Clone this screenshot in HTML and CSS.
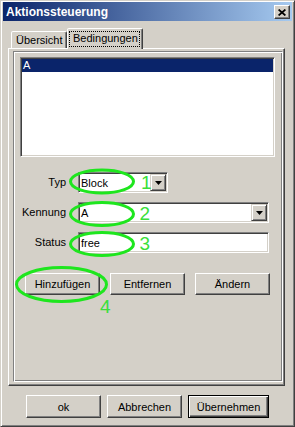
FILE: index.html
```html
<!DOCTYPE html>
<html lang="de">

	<head>
		<meta charset="UTF-8">
		<title>Aktionssteuerung</title>
		<link rel="stylesheet" href="styles.css">
	</head>

	<body>
		<div class="window">
			<!-- Titelleiste -->
			<div class="titlebar">
				<span class="title">Aktionssteuerung</span>
				<button class="close">
					<svg width="8" height="7" viewBox="0 0 8 7"><path d="M0.6 0.5L7.4 6.5M7.4 0.5L0.6 6.5" stroke="#000" stroke-width="1.7" fill="none"/></svg>
				</button>
			</div>

			<!-- Reiter -->
			<div class="tabs">
				<div class="tab">Übersicht</div>
				<div class="tab active"><span class="focus">Bedingungen</span></div>
			</div>

			<div class="panel">
				<div class="group">
					<div class="listbox">
						<div class="item selected">A</div>
					</div>

					<div class="form">
						<label>Typ</label>
						<div class="field short">
							<span>Block</span>
							<span class="drop"><svg width="7" height="4" viewBox="0 0 7 4"><path d="M0 0h7L3.5 4z" fill="#000"/></svg></span>
						</div>
						<label>Kennung</label>
						<div class="field">
							<span>A</span>
							<span class="drop"><svg width="7" height="4" viewBox="0 0 7 4"><path d="M0 0h7L3.5 4z" fill="#000"/></svg></span>
						</div>
						<label>Status</label>
						<div class="field">
							<span>free</span>
						</div>
					</div>

					<div class="actions">
						<button class="btn">Hinzufügen</button>
						<button class="btn">Entfernen</button>
						<button class="btn">Ändern</button>
					</div>
				</div>
			</div>

			<div class="footer">
				<button class="btn">ok</button>
				<button class="btn">Abbrechen</button>
				<button class="btn default">Übernehmen</button>
			</div>

			<!-- Markierungen -->
			<svg class="marks" width="295" height="427" viewBox="0 0 295 427">
				<g fill="none" stroke="#1ee61e" stroke-width="3">
					<ellipse cx="102" cy="181.5" rx="31.5" ry="11.5"/>
					<ellipse cx="102" cy="214" rx="31.5" ry="11.5"/>
					<ellipse cx="102" cy="244" rx="31.5" ry="11.5"/>
					<ellipse cx="61.5" cy="284.5" rx="45" ry="17"/>
				</g>
				<g class="num">
					<text x="141" y="189">1</text>
					<text x="139.5" y="220">2</text>
					<text x="139.5" y="250">3</text>
					<text x="100" y="313">4</text>
				</g>
			</svg>
		</div>
	</body>

</html>
```

FILE: styles.css
```css
body {
	margin: 0;
	padding: 0;
	background-color: #d4d0c8;
}

.window {
	position: relative;
	width: 295px;
	height: 427px;
	box-sizing: border-box;
	background-color: #d4d0c8;
	border: 1px solid;
	border-color: #d4d0c8 #404040 #404040 #d4d0c8;
	box-shadow: inset 1px 1px #fff, inset -1px -1px #808080;
	padding: 1px 2px 0 2px;
	font-family: "Liberation Sans", Arial, sans-serif;
	font-size: 11px;
	color: #000;
}

.titlebar {
	height: 19px;
	display: flex;
	justify-content: space-between;
	align-items: flex-start;
	background: linear-gradient(to right, #0a246a, #a6caf0);
	padding-left: 3px;
}

.title {
	color: #fff;
	font-weight: bold;
	font-size: 12px;
	line-height: 13px;
	padding-top: 4px;
}

.close {
	width: 16px;
	height: 14px;
	margin: 3px 2px 0 0;
	padding: 0;
	box-sizing: border-box;
	background-color: #d4d0c8;
	border: 1px solid;
	border-color: #fff #404040 #404040 #fff;
	box-shadow: inset -1px -1px #808080;
	display: flex;
	justify-content: center;
	align-items: center;
}

.close svg {
	display: block;
}

/* Reiter */
.tabs {
	display: flex;
	align-items: flex-end;
	margin-top: 7px;
	padding-left: 8px;
	height: 20px;
}

.tab {
	width: 56px;
	height: 17px;
	box-sizing: border-box;
	border: 1px solid;
	border-bottom: 0;
	border-color: #fff #404040 transparent #fff;
	box-shadow: inset -1px 0 #808080;
	border-radius: 2px 2px 0 0;
	padding: 2px 0 0 4px;
	line-height: 13px;
	background-color: #d4d0c8;
}

.tab.active {
	width: 76px;
	height: 21px;
	margin-bottom: -1px;
	padding: 2px 2px 0 1px;
	position: relative;
	z-index: 1;
}

.focus {
	display: block;
	border: 1px dotted #000;
	padding: 0 3px 2px;
	line-height: 12px;
}

.panel {
	height: 338px;
	box-sizing: border-box;
	margin: 0 7px 0 5px;
	border: 1px solid;
	border-color: #fff #404040 #404040 #fff;
	box-shadow: inset -1px -1px #808080;
	padding: 2px 0 0 4px;
}

.group {
	width: 270px;
	height: 331px;
	box-sizing: border-box;
	border: 1px solid;
	border-color: #808080 #fff #fff #808080;
	box-shadow: inset 1px 1px #fff, inset -1px -1px #808080;
	padding: 1px;
}

.listbox {
	width: 255px;
	height: 100px;
	box-sizing: border-box;
	margin: 4px 0 0 5px;
	background-color: #fff;
	border: 1px solid;
	border-color: #808080 #fff #fff #808080;
	box-shadow: inset 1px 1px #404040, inset -1px -1px #d4d0c8;
	padding: 1px;
}

.item {
	height: 13px;
	line-height: 13px;
	padding-left: 1px;
}

.item.selected {
	background-color: #0a246a;
	color: #fff;
}

.form {
	display: grid;
	grid-template-columns: 51px 191px;
	grid-auto-rows: 21px;
	column-gap: 12px;
	row-gap: 9px;
	margin-top: 15px;
}

.form label {
	text-align: right;
	line-height: 21px;
}

.field {
	box-sizing: border-box;
	height: 21px;
	display: flex;
	align-items: center;
	background-color: #fff;
	border: 1px solid;
	border-color: #808080 #fff #fff #808080;
	box-shadow: inset 1px 1px #404040, inset -1px -1px #d4d0c8;
	padding: 1px 1px 1px 2px;
}

.field.short {
	width: 90px;
}

.drop {
	margin-left: auto;
	width: 16px;
	height: 17px;
	box-sizing: border-box;
	background-color: #d4d0c8;
	border: 1px solid;
	border-color: #d4d0c8 #404040 #404040 #d4d0c8;
	box-shadow: inset 1px 1px #fff, inset -1px -1px #808080;
	display: flex;
	justify-content: center;
	align-items: center;
}

.drop svg {
	display: block;
}

.btn {
	width: 75px;
	height: 22px;
	box-sizing: border-box;
	padding: 0;
	background-color: #d4d0c8;
	border: 1px solid;
	border-color: #fff #404040 #404040 #fff;
	box-shadow: inset -1px -1px #808080;
	font-family: "Liberation Sans", Arial, sans-serif;
	font-size: 11px;
	color: #000;
}

.actions {
	display: flex;
	gap: 10px;
	margin: 20px 0 0 10px;
}

.footer {
	display: flex;
	gap: 6px;
	margin-top: 9px;
	padding-left: 23px;
}

.footer .btn {
	height: 23px;
}

.footer .btn.default {
	width: 81px;
	border: 1px solid #000;
	box-shadow: inset 1px 1px #fff, inset -1px -1px #404040, inset -2px -2px #808080;
}

/* Markierungen */
.marks {
	position: absolute;
	left: -1px;
	top: -1px;
	pointer-events: none;
}

.num text {
	font-family: "Liberation Sans", Arial, sans-serif;
	font-size: 19px;
	fill: #3adf3a;
}
```
